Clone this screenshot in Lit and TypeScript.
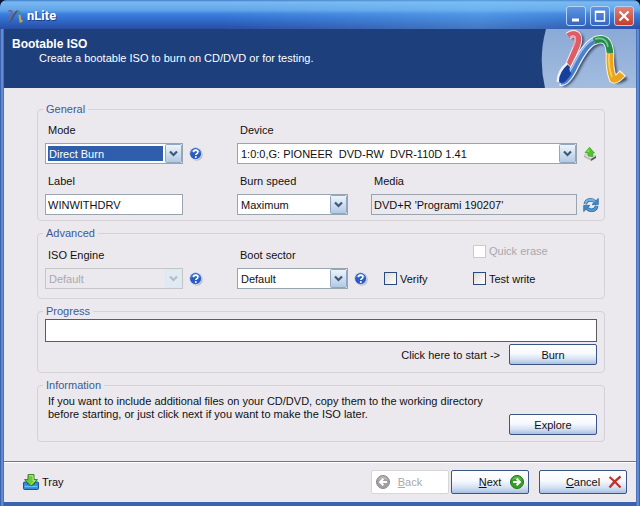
import { LitElement, html, css, svg } from "lit";
import { customElement } from "lit/decorators.js";

const helpIcon = html`<svg width="14" height="14" viewBox="0 0 14 14" aria-hidden="true">
  <circle cx="7.6" cy="7.6" r="6.2" fill="#bdbcc6" />
  <circle cx="6.6" cy="6.6" r="6" fill="#2a5cc0" stroke="#dfe8f6" stroke-width=".8" />
  <path d="M1.800 5.600a5 5 0 0 1 9.600 0a9 6 0 0 0-9.600 0" fill="#7ba0e6" opacity=".7" />
  <path d="M4.500 5.200q.1-2.100 2.200-2.100q2.200 0 2.200 1.800q0 1.200-1.200 1.800q-.9.500-.9 1.400" fill="none" stroke="#fff" stroke-width="1.600" />
  <circle cx="6.800" cy="10.100" r="1" fill="#fff" />
</svg>`;

const ejectIcon = html`<svg width="14" height="14" viewBox="0 0 14 14" aria-hidden="true">
  <path d="M1 8.500l5-2.500l7 3l-5 3z" fill="#e4e4e6" stroke="#a9a9ac" stroke-width=".6" />
  <path d="M1 8.500l7 3.500v1.800l-7-3.600z" fill="#bdbdc0" />
  <path d="M8 12l5-3v2l-5 3z" fill="#55565a" />
  <path d="M6.500.3l5 5.700l-1.900.2l.2 3.500l-4.800-.8l.1-2.900l-3.100-.3z" fill="#4fc32a" stroke="#2f9a1c" stroke-width=".6" />
  <path d="M6.300 1.800l-2.600 2.900l2.200.2l.4 2.600z" fill="#9be86c" opacity=".8" />
</svg>`;

const refreshIcon = html`<svg width="16" height="16" viewBox="0 0 16 16" aria-hidden="true">
  <path d="M2.300 7.200q.8-4.300 5.300-4.500q2.600 0 4.200 1.900" fill="none" stroke="#24629f" stroke-width="3.600" />
  <path d="M9 7.600h6.300v-6.200z" fill="#3f88c8" stroke="#24629f" stroke-width=".7" />
  <path d="M13.700 8.800q-.8 4.300-5.300 4.500q-2.600 0-4.200-1.900" fill="none" stroke="#24629f" stroke-width="3.600" />
  <path d="M7 8.400h-6.300v6.200z" fill="#3f88c8" stroke="#24629f" stroke-width=".7" />
  <path d="M2.300 7q.8-4.100 5.300-4.300q2.600 0 4.200 1.900" fill="none" stroke="#6db4e6" stroke-width="2.200" />
  <path d="M13.700 9q-.8 4.100-5.300 4.300q-2.600 0-4.200-1.900" fill="none" stroke="#4b9ad6" stroke-width="2.200" />
</svg>`;

const trayIcon = html`<svg width="16" height="16" viewBox="0 0 16 16" aria-hidden="true">
  <path d="M.5 9q0-1 1-1h2l2 3h5l2-3h2q1 0 1 1v5.500q0 1-1 1h-13q-1 0-1-1z" fill="#2f8bdc" stroke="#17539c" />
  <path d="M1.500 12.500h13" stroke="#6cbdf4" stroke-width="1.500" />
  <path d="M5 .6h6v5h3.500l-6.500 6.500l-6.500-6.500h3.500z" fill="#6cc93a" stroke="#2f8420" />
  <path d="M6 1.700h4v4.900h2l-4 4" fill="none" stroke="#b5ec86" stroke-width="1" />
</svg>`;

const arrow = (fill: string, rim: string) => svg`
  <circle cx="7" cy="7" r="6.500" fill=${fill} stroke=${rim} />
  <path d="M2.200 5a5 5 0 0 1 9.600 0q-4.800-2-9.600 0" fill="#fff" opacity=".25" />
  <path d="M3 7h6.500M6.600 3.800l3.400 3.200l-3.400 3.200" fill="none" stroke="#fff" stroke-width="1.900" />`;

@customElement("app-root")
export class AppRoot extends LitElement {
  static styles = css`
    * { box-sizing: border-box; }
    :host {
      display: block;
      background: #0b1430;
      color: #101014;
      font: 11px/14px "Liberation Sans", Arial, sans-serif;
    }
    button, input, select { font: inherit; color: inherit; margin: 0; }
    svg { display: block; flex: none; }
    .window {
      display: flex;
      flex-direction: column;
      min-height: 100vh;
      padding: 0 4px 4px;
      border-radius: 7px 7px 0 0;
      background: linear-gradient(90deg, #2b4f9c 0, #6f9be0 2px, #3a62b2 4px, #3a62b2 calc(100% - 4px), #6f9be0 calc(100% - 2px), #2b4f9c 100%);
    }
    .titlebar {
      display: flex;
      align-items: center;
      gap: 4px;
      height: 29px;
      margin: 0 -4px;
      padding: 2px 6px 0 7px;
      border-radius: 7px 7px 0 0;
      background: linear-gradient(90deg, transparent 35%, #7cc8f855 75%, transparent), linear-gradient(#3f7cc8 0, #7ab8f0 2px, #62a6ea 10px, #3d7fdc 14px, #2f6bcb 20px, #2b4fa6 28px);
    }
    .title { flex: 1; margin: 0; color: #fff; font: bold 13px/16px Roboto, sans-serif; text-shadow: 1px 1px #1d3d80; }
    .winbtn {
      display: grid;
      place-items: center;
      width: 20px;
      height: 20px;
      padding: 0;
      border: 1px solid #b9d2f4;
      border-radius: 3px;
      background: linear-gradient(#5c97e2, #3566c0);
    }
    .winbtn.close { background: linear-gradient(#e0837a, #c63c2c); }
    .banner {
      display: flex;
      justify-content: space-between;
      min-height: 59px;
      background: #1d3f7c;
      color: #fff;
    }
    .heading { padding: 8px 0 0 8px; }
    .heading h1 { margin: 0; font: bold 12px/14px "Liberation Sans", Arial, sans-serif; }
    .heading p { margin: 0 0 0 27px; }
    .main {
      flex: 1;
      display: flex;
      flex-direction: column;
      gap: 5px;
      padding: 14px 31px 18px 33px;
      background: #ebe9ed;
    }
    fieldset {
      min-width: 0;
      margin: 0;
      padding: 7px;
      border: 1px solid #d3d2d8;
      border-radius: 4px;
    }
    legend { margin-left: -2px; padding: 0 3px; color: #3c5a96; }
    .grid { display: grid; align-items: center; }
    .general { padding-bottom: 5px; }
    .general .grid { grid-template-columns: 192px 134px 1fr; row-gap: 6px; }
    .wide { grid-column: span 2; }
    .second { padding-top: 4px; }
    .advanced { padding: 8px 7px 9px; }
    .advanced .grid { grid-template-columns: 192px 147px 89px 1fr; row-gap: 6px; }
    .cap { padding-left: 3px; }
    .line { display: flex; align-items: center; gap: 6px; height: 21px; }
    .combo { display: grid; width: 138px; height: 21px; }
    .combo.small { width: 111px; }
    .combo.fill { flex: 1; width: auto; }
    .combo select, .combo svg { grid-area: 1 / 1; }
    .combo svg { justify-self: end; align-self: center; margin-right: 1px; pointer-events: none; }
    select, .text {
      appearance: none;
      width: 100%;
      min-width: 0;
      height: 21px;
      padding: 0 3px;
      border: 1px solid #98a4ae;
      border-radius: 0;
      outline: none;
      background: #fff;
    }
    .text { padding: 0 2px; }
    .name { width: 138px; }
    .media { flex: 1; background: #ebe9ed; }
    .active { color: #fff; background: linear-gradient(#2f5fac, #2f5fac) 2px 2px / calc(100% - 21px) calc(100% - 4px) no-repeat #fff; }
    select:disabled { color: #a9a8ae; opacity: 1; background: #ebe9ed; border-color: #c3c6c4; }
    .icon { display: grid; place-items: center; width: 14px; height: 16px; padding: 0; border: 0; background: none; }
    .check { display: flex; align-items: center; gap: 3px; }
    .check input {
      appearance: none;
      width: 13px;
      height: 13px;
      border: 1px solid #2a4a7c;
      background: linear-gradient(135deg, #dcdcd8, #fff);
    }
    .check.off { color: #a9a8ae; }
    .check.off input { border-color: #cccbc6; background: #fff; }
    .erase { grid-column: 4; align-self: start; margin-top: -4px; }
    .progress { padding-top: 1px; }
    progress {
      appearance: none;
      display: block;
      width: 100%;
      height: 23px;
      border: 1px solid #5c5c5c;
      background: #fff;
    }
    progress::-webkit-progress-bar { background: #fff; }
    progress::-webkit-progress-value { background: #2f5fac; }
    .start { display: flex; justify-content: flex-end; align-items: center; gap: 9px; margin-top: 2px; }
    .btn {
      display: flex;
      align-items: center;
      justify-content: center;
      width: 88px;
      height: 21px;
      padding: 0 4px;
      border: 1px solid #3a5586;
      border-radius: 2px;
      background: linear-gradient(#fff 0, #f6f9fd 45%, #d5e1f2 75%, #a8c0e2 100%);
    }
    .info { padding: 3px 7px 6px; }
    .info .body { display: flex; justify-content: space-between; min-height: 40px; }
    .info p { margin: 0; padding-left: 3px; line-height: 13px; }
    .info .btn { flex: none; align-self: flex-end; }
    .footer {
      display: flex;
      align-items: center;
      gap: 2px;
      padding: 8px 9px;
      border-top: 1px solid #77777b;
      background: #ebe9ed;
      box-shadow: inset 0 1px #fff;
    }
    .tray { display: flex; align-items: center; gap: 3px; margin: 0 auto 0 10px; padding: 0; border: 0; background: none; }
    .footer .btn { display: grid; grid-template-columns: 14px 1fr 14px; width: 78px; height: 24px; }
    .footer .btn span { grid-column: 2; text-align: center; }
    .footer .btn.cancel { width: 88px; margin-left: 8px; }
    .footer .btn:disabled { border-color: #d6d6d8; background: #fff; color: #a9a8ae; }
  `;

  private combo(id: string, value: string, kind = "", disabled = false) {
    return html`<span class="combo ${kind}">
      <select id=${id} class=${id === "mode" ? "active" : ""} ?disabled=${disabled}><option>${value}</option></select>
      <svg width="17" height="19" viewBox="0 0 17 19" aria-hidden="true">
        <defs><linearGradient id="drop" x2="0" y2="1"><stop stop-color="#eef5fc" /><stop offset="1" stop-color="#b0c8e4" /></linearGradient></defs>
        <rect x=".5" y=".5" width="16" height="18" rx="1" fill=${disabled ? "#dfeaf4" : "url(#drop)"} stroke=${disabled ? "#dce8f0" : "#92a6bf"} />
        <path d="M5 7.500l3.500 3.500l3.500-3.500" fill="none" stroke=${disabled ? "#b4bcc4" : "#3f5875"} stroke-width="2.200" />
      </svg>
    </span>`;
  }

  render() {
    return html`<div class="window">
      <header class="titlebar">
        <svg width="16" height="16" viewBox="0 0 16 16" aria-hidden="true">
          <path d="M1.500 3.500q3-2 3.500 1q0 3-3 9" fill="none" stroke="#7d6480" stroke-width="1.800" />
          <path d="M2 14q2-1 4-5q3-6 5-6" fill="none" stroke="#3f5a86" stroke-width="1.800" />
          <path d="M10 3q2.500 0 2.500 4" fill="none" stroke="#4f8a80" stroke-width="2" />
          <path d="M12.500 7l1 6.500l2-1" fill="none" stroke="#c3a64a" stroke-width="2" />
        </svg>
        <h2 class="title">nLite</h2>
        <button class="winbtn" aria-label="Minimize"><svg width="14" height="14" viewBox="0 0 14 14"><path d="M3 11h7" stroke="#fff" stroke-width="3" /></svg></button>
        <button class="winbtn" aria-label="Maximize"><svg width="14" height="14" viewBox="0 0 14 14"><path d="M2.500 2v10h9v-10" fill="none" stroke="#fff" stroke-width="1.400" /><path d="M2 2.800h10" stroke="#fff" stroke-width="2.400" /></svg></button>
        <button class="winbtn close" aria-label="Close"><svg width="14" height="14" viewBox="0 0 14 14"><path d="M2.500 2.500l9 9M11.500 2.500l-9 9" stroke="#fff" stroke-width="2.200" /></svg></button>
      </header>
      <div class="banner">
        <div class="heading">
          <h1>Bootable ISO</h1>
          <p>Create a bootable ISO to burn on CD/DVD or for testing.</p>
        </div>
        <svg width="95" height="59" viewBox="0 0 95 59" aria-hidden="true">
          <defs>
            <linearGradient id="sky" x2="0" y2="1"><stop stop-color="#8aa9d6" /><stop offset="1" stop-color="#a3bddf" /></linearGradient>
            <filter id="soft"><feGaussianBlur stdDeviation="1.200" /></filter>
          </defs>
          <path d="M5 0h90v59h-91q-7-30 1-59z" fill="url(#sky)" />
          <g fill="none" stroke="#26364f" stroke-opacity=".75" stroke-width="6" filter="url(#soft)">
            <path d="M31 8q9-4 9 4q-1 9-9 28" />
            <path d="M22 55q7 0 15-17q13-25 24-25q9 0 10 14l3 23q3 4 11-2" />
          </g>
          <g fill="none" stroke-linejoin="round">
            <path d="M27 7q5-4 9-1q3 3 0 11l-9 21" stroke="#f6e6ea" stroke-width="7.500" />
            <path d="M27 7q5-4 9-1q3 3 0 11l-9 21" stroke="#de5c66" stroke-width="5.500" />
            <path d="M29 8q4-2 5 0q1 3-2 10" stroke="#f4a2a8" stroke-width="1.800" />
            <path d="M19 53q7 1 15-16q12-24 22-26" stroke="#eef3fb" stroke-width="8" />
            <path d="M28 36q-9 7-9 17" stroke="#eef3fb" stroke-width="7" />
            <path d="M20 53q6 1 14-16q12-24 22-26" stroke="#4c7fcc" stroke-width="5.500" />
            <path d="M23 49q5-4 10-14q11-22 21-25" stroke="#9dc0ec" stroke-width="1.600" />
            <path d="M28 37q-8 7-8 15q4 0 9-9" fill="#173f9c" stroke="#173f9c" stroke-width="4" />
            <path d="M53 12q15-7 16 13" stroke="#e6f2ea" stroke-width="8.500" />
            <path d="M53 12q15-7 16 13" stroke="#258a4a" stroke-width="6.500" />
            <path d="M54 10q11-3 13 8" stroke="#7cc698" stroke-width="1.600" />
            <path d="M69 24q-1 15 3 26q3 2 10-6" stroke="#fbf1d4" stroke-width="8.500" />
            <path d="M69 24q-1 15 3 26q3 2 9-5" stroke="#eca51a" stroke-width="6.500" />
            <path d="M68 25q-1 12 3 23" stroke="#f9cf62" stroke-width="1.800" />
          </g>
        </svg>
      </div>
      <main class="main">
        <fieldset class="general">
          <legend>General</legend>
          <div class="grid">
            <label class="cap" for="mode">Mode</label>
            <label class="cap wide" for="device">Device</label>
            <div class="line">${this.combo("mode", "Direct Burn")}<button class="icon" aria-label="Mode help">${helpIcon}</button></div>
            <div class="line wide">${this.combo("device", "1:0:0,G: PIONEER \u00a0DVD-RW \u00a0DVR-110D 1.41", "fill")}<button class="icon" aria-label="Eject">${ejectIcon}</button></div>
            <label class="cap second" for="label">Label</label>
            <label class="cap second" for="speed">Burn speed</label>
            <label class="cap second" for="media">Media</label>
            <div class="line"><input class="text name" id="label" value="WINWITHDRV" /></div>
            <div class="line">${this.combo("speed", "Maximum", "small")}</div>
            <div class="line"><input class="text media" id="media" readonly value="DVD+R 'Programi 190207'" /><button class="icon" aria-label="Refresh media">${refreshIcon}</button></div>
          </div>
        </fieldset>
        <fieldset class="advanced">
          <legend>Advanced</legend>
          <div class="grid">
            <label class="cap" for="engine">ISO Engine</label>
            <label class="cap" for="boot">Boot sector</label>
            <label class="check off erase"><input type="checkbox" disabled />Quick erase</label>
            <div class="line">${this.combo("engine", "Default", "", true)}<button class="icon" aria-label="Engine help">${helpIcon}</button></div>
            <div class="line">${this.combo("boot", "Default", "small")}<button class="icon" aria-label="Boot sector help">${helpIcon}</button></div>
            <label class="check"><input type="checkbox" />Verify</label>
            <label class="check"><input type="checkbox" />Test write</label>
          </div>
        </fieldset>
        <fieldset class="progress">
          <legend>Progress</legend>
          <progress value="0" max="100" aria-label="Burn progress"></progress>
          <div class="start"><span>Click here to start -&gt;</span><button class="btn">Burn</button></div>
        </fieldset>
        <fieldset class="info">
          <legend>Information</legend>
          <div class="body">
            <p>If you want to include additional files on your CD/DVD, copy them to the working directory<br />before starting, or just click next if you want to make the ISO later.</p>
            <button class="btn">Explore</button>
          </div>
        </fieldset>
      </main>
      <footer class="footer">
        <button class="tray">${trayIcon}Tray</button>
        <button class="btn" disabled>
          <svg width="14" height="14" viewBox="0 0 14 14"><g transform="matrix(-1 0 0 1 14 0)">${arrow("#a0a0a2", "#8c8c8e")}</g></svg>
          <span><u>B</u>ack</span>
        </button>
        <button class="btn"><span><u>N</u>ext</span><svg width="14" height="14" viewBox="0 0 14 14">${arrow("#35a01f", "#23741a")}</svg></button>
        <button class="btn cancel"><span><u>C</u>ancel</span><svg width="14" height="14" viewBox="0 0 14 14"><path d="M1.500 2q5 4 11 10.500M12.500 1.500q-6 4.500-11 11" fill="none" stroke="#c03024" stroke-width="2.200" /></svg></button>
      </footer>
    </div>`;
  }
}
